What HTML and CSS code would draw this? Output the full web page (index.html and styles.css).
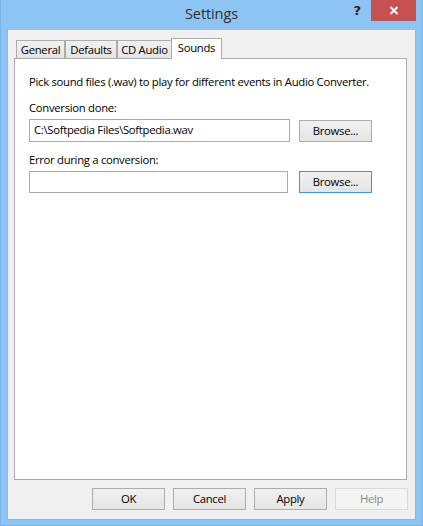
FILE: index.html
```html
<!DOCTYPE html>
<html>
<head>
<meta charset="utf-8">
<link rel="stylesheet" href="styles.css">
</head>
<body>
<div class="window">
  <div class="titlebar">
    <div></div>
    <div class="title">Settings</div>
    <div class="controls">
      <span class="help">?</span>
      <div class="close">
        <svg width="10" height="9" viewBox="0 0 10 9"><path d="M1.5 1 L8.5 8 M8.5 1 L1.5 8" stroke="#fff" stroke-width="2" fill="none"/></svg>
      </div>
    </div>
  </div>
  <div class="client">
    <div class="tabs">
      <div class="tab">General</div>
      <div class="tab">Defaults</div>
      <div class="tab">CD Audio</div>
      <div class="tab active">Sounds</div>
    </div>
    <div class="panel">
      <p class="desc">Pick sound files (.wav) to play for different events in Audio Converter.</p>
      <div class="label">Conversion done:</div>
      <div class="row">
        <div class="textbox">C:\Softpedia Files\Softpedia.wav</div>
        <div class="btn">Browse...</div>
      </div>
      <div class="label second">Error during a conversion:</div>
      <div class="row">
        <div class="textbox narrow"></div>
        <div class="btn default">Browse...</div>
      </div>
    </div>
    <div class="buttons">
      <div class="btn">OK</div>
      <div class="btn">Cancel</div>
      <div class="btn">Apply</div>
      <div class="btn disabled">Help</div>
    </div>
  </div>
</div>
</body>
</html>
```
FILE: styles.css
```css
html, body {
  margin: 0;
  padding: 0;
}
body {
  font-family: "Open Sans", "Noto Sans", sans-serif;
  font-size: 11.3px;
  letter-spacing: -0.3px;
  color: #000;
}
.window {
  width: 423px;
  height: 526px;
  box-sizing: border-box;
  background: #8dc4f4;
  border: 1px solid #79b4e8;
  border-top: none;
  padding: 0 6px 5px 6px;
  display: flex;
  flex-direction: column;
}
.titlebar {
  height: 30px;
  display: grid;
  grid-template-columns: 1fr auto 1fr;
  align-items: start;
}
.title {
  font-size: 14.5px;
  letter-spacing: -0.1px;
  line-height: 20px;
  padding-top: 4px;
  color: #2f2f2f;
}
.controls {
  justify-self: end;
  display: flex;
  align-items: flex-start;
}
.help {
  font-family: "DejaVu Sans", sans-serif;
  font-weight: bold;
  font-size: 13px;
  line-height: 14px;
  letter-spacing: 0;
  margin-top: 4px;
  margin-right: 10px;
  color: #262626;
}
.close {
  width: 45px;
  height: 21px;
  background: #c75050;
  display: flex;
  align-items: center;
  justify-content: center;
}
.client {
  flex: 1;
  background: #f0f0f0;
  border: 1px solid #83b9e9;
  border-top: none;
  display: flex;
  flex-direction: column;
  padding-top: 1px;
}
.tabs {
  display: flex;
  align-items: flex-end;
  margin-left: 8px;
  padding-top: 7px;
  position: relative;
  z-index: 1;
}
.tab {
  height: 18px;
  box-sizing: border-box;
  border: 1px solid #acacac;
  border-bottom: none;
  background: linear-gradient(#f0f0f0, #e5e5e5);
  text-align: center;
  line-height: 16px;
  padding-top: 1px;
  white-space: nowrap;
}
.tab:nth-child(1) { width: 49px; }
.tab:nth-child(2) { width: 52px; }
.tab:nth-child(3) { width: 55px; }
.tab.active {
  width: 51px;
  height: 21px;
  background: #fff;
  margin-left: -1px;
  margin-bottom: -1px;
  padding-top: 0;
  line-height: 17px;
}
.panel {
  flex: 1;
  margin: 0 8px 0 6px;
  background: #fff;
  border: 1px solid #acacac;
  padding: 15px 14px 0 14px;
}
.desc {
  margin: 0;
  line-height: 16px;
  white-space: nowrap;
}
.label {
  margin-top: 10px;
  line-height: 16px;
}
.label.second {
  margin-top: 10px;
}
.row {
  display: flex;
  align-items: center;
  gap: 9px;
  margin-top: 3px;
}
.textbox {
  width: 261px;
  height: 23px;
  box-sizing: border-box;
  border: 1px solid #acacac;
  background: #fff;
  padding: 0 4px;
  line-height: 19px;
}
.textbox.narrow {
  width: 259px;
  height: 22px;
  margin-right: 2px;
}
.btn {
  width: 73px;
  height: 22px;
  box-sizing: border-box;
  border: 1px solid #acacac;
  background: linear-gradient(#f0f0f0, #e5e5e5);
  text-align: center;
  line-height: 19px;
}
.btn.default {
  border-color: #3c94e8;
}
.btn.disabled {
  border-color: #d9d9d9;
  background: #f4f4f4;
  color: #8a8a8a;
}
.buttons {
  display: flex;
  justify-content: flex-end;
  gap: 8px;
  padding: 8px 7px 9px 0;
}
```
